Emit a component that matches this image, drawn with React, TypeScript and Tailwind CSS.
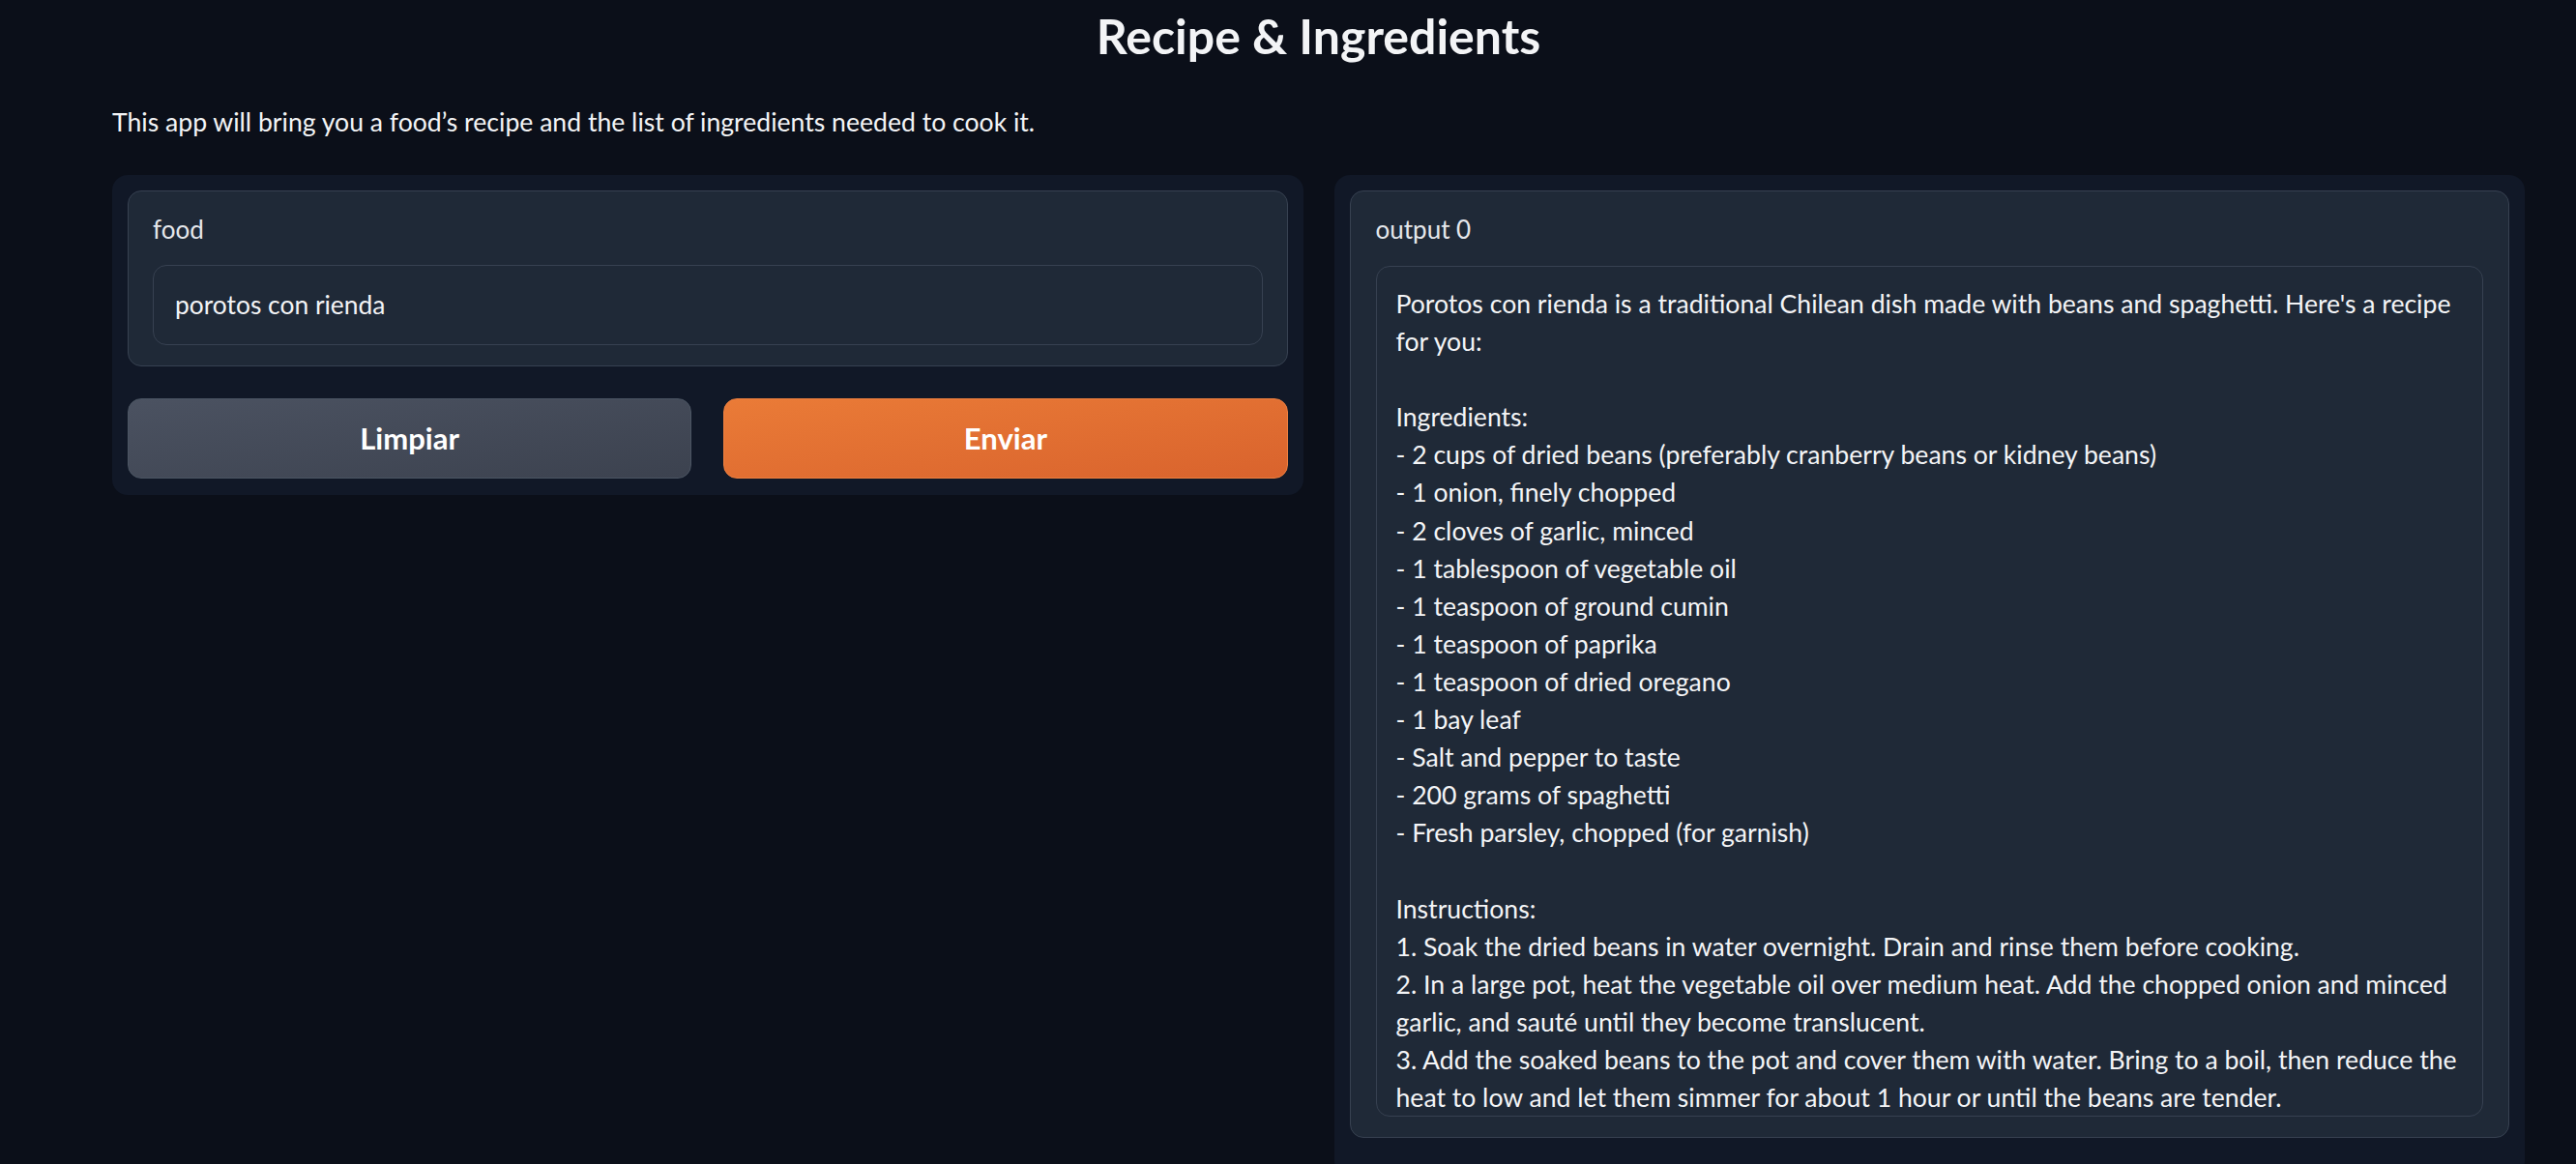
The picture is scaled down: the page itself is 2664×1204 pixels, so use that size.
import React from "react";

const lines: string[] = [
  "Porotos con rienda is a traditional Chilean dish made with beans and spaghetti. Here's a recipe",
  "for you:",
  "",
  "Ingredients:",
  "- 2 cups of dried beans (preferably cranberry beans or kidney beans)",
  "- 1 onion, finely chopped",
  "- 2 cloves of garlic, minced",
  "- 1 tablespoon of vegetable oil",
  "- 1 teaspoon of ground cumin",
  "- 1 teaspoon of paprika",
  "- 1 teaspoon of dried oregano",
  "- 1 bay leaf",
  "- Salt and pepper to taste",
  "- 200 grams of spaghetti",
  "- Fresh parsley, chopped (for garnish)",
  "",
  "Instructions:",
  "1. Soak the dried beans in water overnight. Drain and rinse them before cooking.",
  "2. In a large pot, heat the vegetable oil over medium heat. Add the chopped onion and minced",
  "garlic, and sauté until they become translucent.",
  "3. Add the soaked beans to the pot and cover them with water. Bring to a boil, then reduce the",
  "heat to low and let them simmer for about 1 hour or until the beans are tender.",
];

export default function App() {
  return (
    <div className="min-h-screen bg-[#0b0f19] font-['Lato',sans-serif] text-[#f3f4f6]">
      <div className="ml-[116px] w-[2495px]">
        <h1 className="pt-[2px] text-center text-[50px] font-bold leading-[70px] text-[#f3f4f6]">
          Recipe &amp; Ingredients
        </h1>
        <p className="mt-[34px] text-[26.6px] leading-[40px] text-[#f3f4f6]">
          This app will bring you a food’s recipe and the list of ingredients needed to cook it.
        </p>
        <div className="mt-[35px] grid grid-cols-2 items-start gap-[32px]">
          {/* Left panel */}
          <div className="rounded-[16px] bg-[#111827] px-[16px] pt-[16px] pb-[17px]">
            <div className="rounded-[14px] border border-[#374151] bg-[#1f2937] px-[25px] pt-[20px] pb-[21px]">
              <div className="text-[26px] leading-[39px] text-[#e5e7eb]">food</div>
              <div className="mt-[17px] flex h-[83px] items-center rounded-[14px] border border-[#374151] bg-[#1f2937] px-[22px]">
                <span className="text-[26.4px] leading-[39px] text-[#f3f4f6]">porotos con rienda</span>
              </div>
            </div>
            <div className="mt-[33px] grid grid-cols-2 gap-[33px]">
              <button className="flex h-[83px] items-center justify-center rounded-[14px] border border-[#4b5563] bg-linear-to-br from-[#4b5261] to-[#3c424f] text-[31px] font-bold text-white">
                Limpiar
              </button>
              <button className="flex h-[83px] items-center justify-center rounded-[14px] border border-[#ee8040] bg-linear-to-br from-[#ea7b37] to-[#d9632d] text-[31px] font-bold text-white">
                Enviar
              </button>
            </div>
          </div>

          {/* Right panel */}
          <div className="rounded-[16px] bg-[#111827] px-[16px] pt-[16px] pb-[40px]">
            <div className="rounded-[14px] border border-[#374151] bg-[#1f2937] px-[26px] pt-[20px] pb-[21px]">
              <div className="text-[26px] leading-[39px] text-[#e5e7eb]">output 0</div>
              <div className="mt-[18px] h-[880px] overflow-hidden rounded-[14px] border border-[#374151] bg-[#1f2937] px-[20px] pt-[19px]">
                {lines.map((l, i) => (
                  <div key={i} className="h-[39.1px] whitespace-pre text-[26.6px] leading-[39.1px] text-[#f3f4f6]">
                    {l === "" ? "\u00a0" : l}
                  </div>
                ))}
              </div>
            </div>
          </div>
        </div>
      </div>
    </div>
  );
}
